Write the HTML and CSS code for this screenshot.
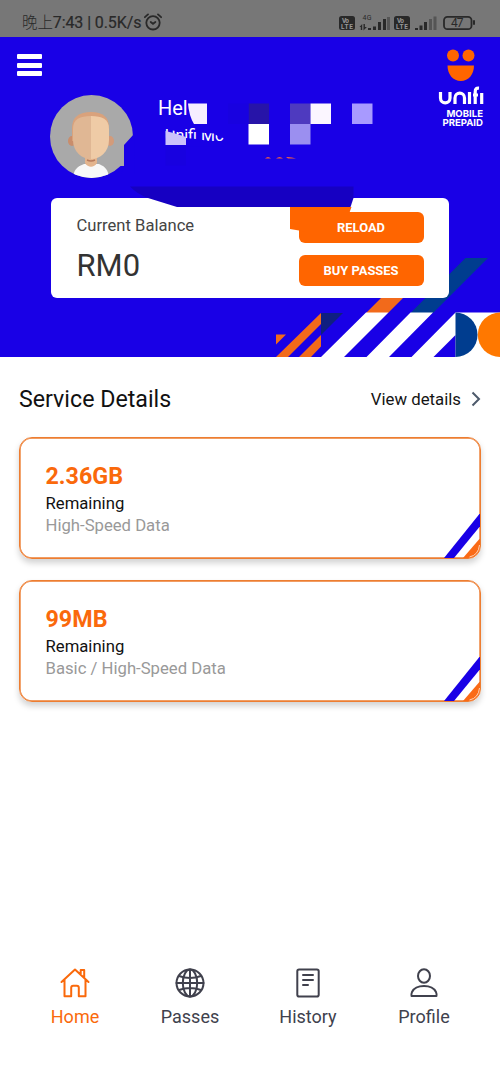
FILE: index.html
```html
<!DOCTYPE html>
<html lang="en">
<head>
<meta charset="utf-8">
<title>Unifi Mobile Prepaid</title>
<link rel="stylesheet" href="styles.css">
</head>
<body>
<div class="app">
  <div class="status">
    <span class="status-text"><span class="cjk">晚上</span>7:43 | 0.5K/s</span>
    <svg class="alarm" width="18" height="18" viewBox="0 0 18 18" fill="none" stroke="#292929" stroke-width="1.8" stroke-linecap="round"><circle cx="9" cy="9.8" r="6.7"/><path d="M.9 4.2 4 1.4M17.1 4.2 14 1.4M6.7 9 9 10.8 11.4 9"/></svg>
    <svg class="signals" width="140" height="20" viewBox="338 12 140 20">
      <g fill="#292929">
        <rect x="339" y="16" width="16" height="14" rx="2.5"/><rect x="394" y="16" width="16" height="14" rx="2.5"/>
        <path d="M368 28h3v2h-3zM373 26.500h3v3.500h-3zM378 22h3v8h-3zM383 19h3v11h-3z"/>
        <path d="M415 28h3v2h-3zM419.500 25.500h3v4.500h-3zM424 22h3v8h-3z"/>
        <path d="m359.500 27 2.700-3v6h-1.400v-3zM363.500 24h1.400v3h2L363.500 30.500z"/>
        <rect x="473" y="20" width="2" height="5" rx="1"/>
      </g>
      <path d="M387 17h3v13h-3zM429 19h3v11h-3zM433.500 16.500h3v13.500h-3z" fill="#555"/>
      <rect x="444" y="16.800" width="27.500" height="12.400" rx="3.500" fill="none" stroke="#292929" stroke-width="1.800"/>
      <g class="volte"><text x="342" y="22.700" textLength="7">Vo</text><text x="341" y="28.600" textLength="12">LTE</text><text x="397" y="22.700" textLength="7">Vo</text><text x="396" y="28.600" textLength="12">LTE</text></g>
      <text class="net" x="362.500" y="20.300" textLength="9">4G</text>
      <text class="batt" x="451" y="27" textLength="12.500">47</text>
    </svg>
  </div>

  <header class="hero">
    <svg class="pattern" width="225" height="100" viewBox="275 257 225 100">
      <path fill="#f26a1b" d="M276 334.500h10L276 344.500zM276 357 321 313v11l-33 33zM299 357l22-22v11.500L311 357zM366 313l15-15h22l-15 15z"/>
      <path fill="#0f1f80" d="M321 313h22l-22 22z"/>
      <path fill="#003d8f" d="M410.500 313l55-55H488l-55 55z"/>
      <path fill="#fff" d="M321 357l45-44.500h22.500L344 357zM366.500 357l44-44.500H433L389 357zM411.500 357l44-44.500v22.500l-22 22zM455.500 312.500H500V357h-44.500z"/>
      <path fill="#003d8f" d="M455.500 312.500a22 22.200 0 0 1 0 44.500z"/>
      <circle cx="500" cy="334.700" r="22.200" fill="#ff7800"/>
    </svg>
    <div class="hero-top">
      <div class="menu"><i></i><i></i><i></i></div>
      <svg class="avatar" width="83" height="83" viewBox="0 0 83 83">
        <clipPath id="face"><circle cx="41.500" cy="41.500" r="41.500"/></clipPath>
        <g clip-path="url(#face)">
          <path fill="#a9a9a9" d="M0 0h83v83H0z"/>
          <path fill="#f8f8f8" d="M23 83c1-8 3-11 11-14h15c7 3 9 6 10 14z"/>
          <path fill="#e3b48d" d="M35 61h12v7c-3 5-9 5-12 0z"/>
          <ellipse cx="22" cy="46" rx="4" ry="5" fill="#c98d6c"/><ellipse cx="60" cy="46" rx="4" ry="5" fill="#d39b7a"/>
          <path fill="#d9a27c" d="M22 46V33c0-11 7-16 19-16s18 5 18 16v13z"/>
          <path fill="#e0b794" d="M41 21c-11 0-18 3-18 13v11c0 12 9 19 18 19z"/>
          <path fill="#efcba6" d="M41 21c11 0 18 3 18 13v11c0 12-9 19-18 19z"/>
          <path d="M37 65q4 2 8 0" stroke="#b87a5c" fill="none" stroke-width="1.500"/>
        </g>
      </svg>
      <div class="hello">Hel</div>
      <div class="brand">
        <svg width="48" height="58" viewBox="437 49 48 58">
          <g fill="#ff6500"><circle cx="453" cy="55.500" r="6"/><circle cx="468.500" cy="55.500" r="6"/><path d="M447.500 65.500H474c0 9-5.500 15.500-13.200 15.500S447.500 74.500 447.500 65.500z"/></g>
          <g fill="none" stroke="#fff" stroke-width="3.200"><path d="M440.500 92v6c0 6.500 9.500 6.500 9.500 0v-6M455 104V98c0-6.500 9.500-6.500 9.500 0v6M469.500 92v12M475.200 104V92c0-3.500 1.200-4 3.800-3.800M473 95h5M481.700 93v11"/></g>
        </svg>
        <div class="brand-sub">MOBILE<br>PREPAID</div>
      </div>
    </div>
    <section class="balance">
      <div>
        <div class="balance-label">Current Balance</div>
        <div class="balance-value">RM0</div>
      </div>
      <div class="actions"><div class="btn">RELOAD</div><div class="btn">BUY PASSES</div></div>
    </section>
    <svg class="mask" width="260" height="150" viewBox="115 90 260 150">
      <path fill="#1900e6" d="M134 134l-10 11v21l-3 8h14z"/><path fill="#a9a9a9" d="M112 150h12v16h-12z"/>
      <path fill="#f6eeff" d="M188 103.500h19V124h-13q-5-8-6-20.500z"/>
      <path fill="#2714a8" d="M248.500 103.500H269V124h-20.500z"/><path fill="#4e3abf" d="M290 103.500h20.500V124H290z"/>
      <path fill="#fbf6ff" d="M310.500 103.500H331V124h-20.500z"/><path fill="#a89aff" d="M352 103.500h20.500V124H352z"/>
      <path fill="#fff" d="M248.500 124H269v20.500h-20.500z"/><path fill="#9b8ff0" d="M290 124h20.500v20.500H290z"/>
      <text class="plan" x="165" y="140.500">Unifi Mo</text>
      <path fill="#1900e6" d="M163 124h20v8l-14-2zM198 124h30v14.500l-8-1-6-4-16-1zM186 138l10 1 10 1.500 18 3v3h-38z"/>
      <path fill="#cbc2fb" d="M165.500 131l8 2 12.500 4v8h-20.500z"/>
      <path fill="#1801e0" d="M165.500 145H186v20.500h-20.500zM228 103.500h20.500V124H228z"/>
      <path fill="#e85b4a" d="M265 158.500q3-3 6 0zM276 158.500q3.500-3 7 0zM286 157q5-.5 10 1.500h-8z"/>
      <path fill="#ff6500" d="M290 207h61.500l-2.200 6H306v19l-7-1.500-9-1.500z"/>
      <path fill="#1600c2" d="M130 186.500h223.500V198l-3 9H177l-29-9q-11-4-18-11.500z"/>
    </svg>
  </header>

  <main>
    <div class="heading"><h1>Service Details</h1><div class="view">View details<svg width="10" height="16" viewBox="0 0 10 16" fill="none" stroke="#4d5a6b" stroke-width="2"><path d="m1.500 1.500 6.500 6.500-6.500 6.500"/></svg></div></div>
    <article class="card">
      <div class="amount">2.36GB</div><div class="remaining">Remaining</div><div class="kind">High-Speed Data</div>
      <svg class="corner" width="37" height="46" viewBox="0 0 37 46"><path fill="#1900e6" d="M37 0v13L10 46H0z"/><path fill="#fa6a16" d="M37 25v11q-1 9-10 10h-8z"/><path d="M35.500 33q-1 10-10 12" fill="none" stroke="#ffd5ba"/></svg>
    </article>
    <article class="card">
      <div class="amount">99MB</div><div class="remaining">Remaining</div><div class="kind">Basic / High-Speed Data</div>
      <svg class="corner" width="37" height="46" viewBox="0 0 37 46"><path fill="#1900e6" d="M37 0v13L10 46H0z"/><path fill="#fa6a16" d="M37 25v11q-1 9-10 10h-8z"/><path d="M35.500 33q-1 10-10 12" fill="none" stroke="#ffd5ba"/></svg>
    </article>
  </main>

  <nav>
    <div class="tab active"><svg width="30" height="30" viewBox="0 0 30 30"><path d="M1.500 14 15 1.500 28.500 14M4.500 11.500v16.700h6.700v-8.500q0-2 2-2h3.600q2 0 2 2v8.500h6.700V11.500M20.700 6V2h3.500v7.500"/></svg>Home</div>
    <div class="tab"><svg width="30" height="30" viewBox="0 0 30 30"><circle cx="15" cy="15" r="13.500"/><ellipse cx="15" cy="15" rx="7.200" ry="13.500"/><path d="M15 1.500v27M1.500 15h27M4 8q11 4 22 0M4 22q11-4 22 0"/></svg>Passes</div>
    <div class="tab"><svg width="30" height="30" viewBox="0 0 30 30"><rect x="4.300" y="1.500" width="21.400" height="27" rx="1.800"/><path d="M10 7h10M10 12h10M10 17h5"/></svg>History</div>
    <div class="tab"><svg width="30" height="30" viewBox="0 0 30 30"><ellipse cx="15" cy="8" rx="6" ry="6.700"/><path d="M2.500 28q-.5-1.500.5-4C5 20 9.500 18 15 18s10 2 12 6q1 2.500.5 4z"/></svg>Profile</div>
  </nav>
</div>
</body>
</html>
```
FILE: styles.css
```css
* { box-sizing: border-box; }
body { margin: 0; font-family: Roboto, "Noto Sans CJK SC", sans-serif; background: #fff; }
.app { width: 500px; height: 1083px; display: flex; flex-direction: column; overflow: hidden; }

.status { height: 37px; flex: none; background: #777; display: flex; align-items: flex-start; padding: 12px 22px 0; color: #292929; }
.status-text { font-size: 16px; line-height: 22px; letter-spacing: -.1px; white-space: nowrap; font-weight: 400; -webkit-text-stroke: .2px #292929; }
.cjk { font-weight: 300; font-size: 15.500px; -webkit-text-stroke: 0; }
.alarm { margin: 1px 0 0 3px; }
.signals { margin-left: auto; }
.volte text { font: 700 6.500px Roboto, sans-serif; fill: #999; }
.net { font: 7px Roboto, sans-serif; fill: #292929; }
.batt { font: 12px Roboto, sans-serif; fill: #292929; }

.hero { position: relative; height: 320px; flex: none; background: #1900e6; }
.pattern { position: absolute; right: 0; bottom: 0; }
.hero-top { height: 161.400px; padding: 0 16px 0 17px; display: flex; align-items: flex-start; }
.menu { width: 25px; margin-top: 17px; display: flex; flex-direction: column; gap: 3.500px; }
.menu i { height: 5px; background: #fff; border-radius: 1px; }
.avatar { margin: 58px 0 0 8px; }
.hello { margin: 58px 0 0 25px; font-size: 20px; line-height: 26px; color: #fff; }
.brand { margin: 12px -1px 0 auto; width: 48px; display: flex; flex-direction: column; align-items: flex-end; }
.brand svg { display: block; }
.brand-sub { font: 700 9.600px/9px Inter, sans-serif; margin: 2px 2px 0 0; color: #fff; text-align: right; }
.balance { position: relative; margin: 0 51px; height: 100px; background: #fff; border-radius: 6px; padding: 13.600px 25.500px 0; display: flex; justify-content: space-between; }
.balance-label { padding-top: 4px; font-size: 16.600px; line-height: 20px; color: #444; }
.balance-value { margin-top: 11px; font-size: 31px; line-height: 38px; color: #333; }
.actions { width: 125px; display: flex; flex-direction: column; gap: 12px; }
.btn { height: 31px; border-radius: 6px; background: #ff6500; color: #fff; font-size: 12.900px; line-height: 32px; font-weight: 700; text-align: center; }
.mask { position: absolute; left: 115px; top: 53px; }
.plan { font: 16px Roboto, sans-serif; fill: #fff; }

main { padding: 28px 19px 0; display: flex; flex-direction: column; }
.heading { display: flex; justify-content: space-between; align-items: center; height: 28px; margin-bottom: 24px; }
h1 { margin: 0; font-size: 23.200px; font-weight: 400; color: #111; }
.view { display: flex; align-items: center; gap: 10px; font-size: 16.800px; color: #151515; }
.card { position: relative; height: 122px; margin-bottom: 21px; border: 1px solid #ed7d31; border-radius: 13px; padding: 24px 25.500px 0; box-shadow: 0 4px 6px rgba(0,0,0,.18), inset 0 0 0 .7px #ed7d31; overflow: hidden; }
.amount { font-size: 23.300px; line-height: 28px; font-weight: 700; color: #fa690b; }
.remaining { padding-top: 1px; font-size: 16.700px; line-height: 25px; color: #111; }
.kind { font-size: 16.700px; line-height: 20px; color: #999; }
.corner { position: absolute; right: -1px; bottom: 0; }

nav { margin-top: auto; height: 115px; padding: 0 21px 0 17px; display: grid; grid-template-columns: 116px 114px 122px 1fr; }
.tab { display: flex; flex-direction: column; align-items: center; font-size: 18px; line-height: 24px; color: #40414d; gap: 7px; }
.tab svg { fill: none; stroke: currentColor; stroke-width: 2; stroke-linejoin: round; stroke-linecap: round; }
.active { color: #fa690b; }
```
